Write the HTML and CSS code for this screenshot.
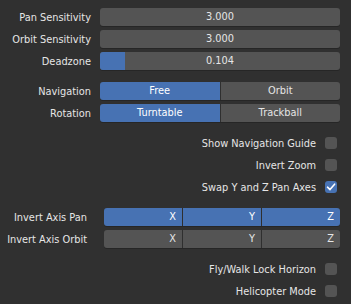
FILE: index.html
```html
<!DOCTYPE html>
<html lang="en">
<head>
    <meta charset="UTF-8">
    <title>Navigation Preferences</title>
    <link rel="stylesheet" href="styles.css">
</head>
<body>
    <div class="panel">
        <div class="group">
            <div class="row">
                <div class="label">Pan Sensitivity</div>
                <div class="field">3.000</div>
            </div>
            <div class="row">
                <div class="label">Orbit Sensitivity</div>
                <div class="field">3.000</div>
            </div>
            <div class="row">
                <div class="label">Deadzone</div>
                <div class="field slider">
                    <div class="fill" style="width: 10.4%"></div>
                    <span>0.104</span>
                </div>
            </div>
        </div>

        <div class="group">
            <div class="row">
                <div class="label">Navigation</div>
                <div class="segmented">
                    <div class="seg active">Free</div>
                    <div class="seg">Orbit</div>
                </div>
            </div>
            <div class="row">
                <div class="label">Rotation</div>
                <div class="segmented">
                    <div class="seg active">Turntable</div>
                    <div class="seg">Trackball</div>
                </div>
            </div>
        </div>

        <div class="group">
            <div class="row check-row">
                <span>Show Navigation Guide</span>
                <div class="checkbox"></div>
            </div>
            <div class="row check-row">
                <span>Invert Zoom</span>
                <div class="checkbox"></div>
            </div>
            <div class="row check-row">
                <span>Swap Y and Z Pan Axes</span>
                <div class="checkbox checked">
                    <svg width="12" height="12" viewBox="0 0 12 12"><path d="M2.5 6.2 L5 8.6 L9.6 3.2" fill="none" stroke="#fff" stroke-width="1.6" stroke-linecap="round" stroke-linejoin="round"/></svg>
                </div>
            </div>
        </div>

        <div class="group">
            <div class="row axis-row">
                <div class="label">Invert Axis Pan</div>
                <div class="segmented">
                    <div class="seg active">X</div>
                    <div class="seg active">Y</div>
                    <div class="seg active">Z</div>
                </div>
            </div>
            <div class="row axis-row">
                <div class="label">Invert Axis Orbit</div>
                <div class="segmented">
                    <div class="seg">X</div>
                    <div class="seg">Y</div>
                    <div class="seg">Z</div>
                </div>
            </div>
        </div>

        <div class="group">
            <div class="row check-row">
                <span>Fly/Walk Lock Horizon</span>
                <div class="checkbox"></div>
            </div>
            <div class="row check-row">
                <span>Helicopter Mode</span>
                <div class="checkbox"></div>
            </div>
        </div>
    </div>
</body>
</html>
```

FILE: styles.css
```css
body {
    margin: 0;
    background-color: #303030;
    font-family: 'DejaVu Sans', sans-serif;
    font-size: 9.8px;
    color: #e6e6e6;
}

.panel {
    padding-top: 8px;
    display: flex;
    flex-direction: column;
    gap: 12px;
}

.group {
    display: flex;
    flex-direction: column;
    gap: 4px;
}

.row {
    display: flex;
    align-items: center;
    height: 18px;
}

.label {
    width: 91px;
    margin-right: 9px;
    text-align: right;
    white-space: nowrap;
}

.field {
    width: 240px;
    height: 18px;
    line-height: 18px;
    background-color: #545454;
    border-radius: 3px;
    text-align: center;
    box-shadow: 0 1px 0 #262626;
}

.slider {
    position: relative;
    overflow: hidden;
}

.slider .fill {
    position: absolute;
    left: 0;
    top: 0;
    bottom: 0;
    background-color: #4772b3;
}

.slider span {
    position: relative;
}

.segmented {
    display: flex;
    width: 240px;
    height: 18px;
    border-radius: 3px;
    overflow: hidden;
    box-shadow: 0 1px 0 #262626;
}

.seg {
    flex: 1;
    line-height: 18px;
    text-align: center;
    background-color: #545454;
}

.seg + .seg {
    border-left: 1px solid #2f2f2f;
}

.seg.active {
    background-color: #4772b3;
    color: #fff;
}

.axis-row .label {
    width: 87px;
    margin-right: 17px;
}

.axis-row .segmented {
    width: 236px;
}

.axis-row .seg {
    text-align: right;
    padding-right: 6px;
}

.check-row {
    justify-content: flex-end;
    padding-right: 14px;
    gap: 9px;
}

.checkbox {
    width: 12px;
    height: 12px;
    border-radius: 3px;
    background-color: #545454;
    display: flex;
}

.checkbox.checked {
    background-color: #4772b3;
}
```
